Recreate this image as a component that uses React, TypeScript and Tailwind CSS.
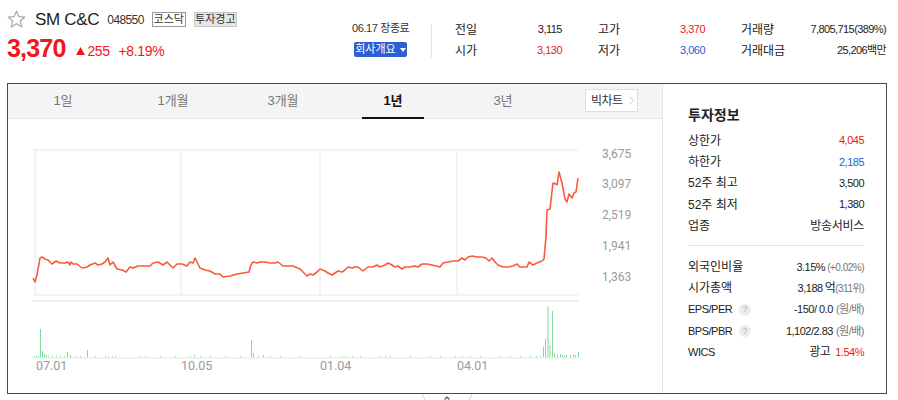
import React from 'react';

const linePts =
  '33,278 35,282 37,275 40,258 42,257 45,259 48,260 52,264 56,261 60,263 65,263 68,262 70,265 71,262 73,264 77,264 82,268 87,267 90,265 95,263 98,265 102,264 105,262 108,258 110,265 113,262 117,269 122,270 126,272 130,267 133,268 138,266 145,266 150,266 153,263 158,262 163,265 167,262 173,268 177,264 182,264 187,266 190,262 193,263 195,258 200,268 205,270 210,271 215,274 220,274 223,277 230,276 237,274 243,273 249,272 251,265 253,262 257,263 260,262 265,262 270,263 275,263 278,262 283,266 287,266 293,266 300,269 303,272 307,276 310,274 313,275 317,272 320,269 325,271 328,273 332,275 335,273 338,271 342,272 345,270 348,267 352,268 355,267 358,267 363,271 368,267 373,267 377,265 380,267 385,265 388,263 392,265 395,267 398,266 402,269 405,267 410,267 415,266 418,267 422,264 427,264 432,265 436,266 440,267 443,263 448,262 453,261 458,261 462,258 465,260 468,257 472,256 477,257 482,257 486,258 489,261 492,258 495,262 498,265 503,267 508,267 513,266 517,264 520,267 527,267 529,262 533,265 537,263 542,261 544,259 546,237 547,210 550,209 553,183 556,184 557,185 559,172 562,183 565,199 567,202 569,194 572,198 574,193 576,192 578,178';

// volume bars: [x, top]
const volBars: [number, number][] = [
  [40, 329], [42, 351], [44, 354], [46, 355], [67, 352], [70, 355], [87, 350], [194, 355],
  [251, 340], [253, 353], [263, 355], [543, 347], [545, 339], [547.5, 306], [549.5, 345],
  [552, 311], [554, 353], [557, 355], [560, 354], [562, 355], [564, 355.5], [566, 355],
  [570, 355], [573, 354], [575, 355], [578, 352],
];
const smallBars = [
  34, 36, 38, 48, 52, 56, 60, 64, 75, 80, 95, 105, 108, 112, 115, 140, 145, 160, 175, 190, 200,
  210, 225, 240, 258, 270, 280, 300, 330, 342, 345, 352, 360, 380, 385, 390, 410, 430, 440, 455,
  462, 470, 480, 500, 510, 520, 530, 536, 540,
];

const yLabels = [
  { v: '3,675', y: 155 },
  { v: '3,097', y: 185 },
  { v: '2,519', y: 216 },
  { v: '1,941', y: 247 },
  { v: '1,363', y: 278 },
];
const xLabels = [
  { v: '07.01', x: 36 },
  { v: '10.05', x: 181 },
  { v: '01.04', x: 320 },
  { v: '04.01', x: 457 },
];

const tabs = ['1일', '1개월', '3개월', '1년', '3년'];

const Help = () => (
  <span className="ml-[7px] inline-flex h-[12px] w-[12px] items-center justify-center rounded-full bg-[#ececec] text-[9px] font-bold leading-none text-[#c4c4c4]">
    ?
  </span>
);

const Row = ({ label, children }: { label: React.ReactNode; children: React.ReactNode }) => (
  <div className="flex h-[21.3px] items-center justify-between">
    <div className="flex items-center text-[12px] text-[#222]">{label}</div>
    <div className="flex items-center text-[11px] tracking-[-0.5px] text-[#222]">{children}</div>
  </div>
);

export default function App() {
  return (
    <div className="h-[400px] w-[898px] overflow-hidden bg-white font-['Liberation_Sans','Noto_Sans_CJK_KR',sans-serif] text-[#222]">
      {/* header */}
      <div className="flex h-[83px]">
        <div className="w-[345px] pl-[7px] pt-[10px]">
          <div className="flex h-[19px] items-center">
            <svg width="19" height="19" viewBox="0 0 20 20">
              <polygon
                points="10,1.2 12.6,7 18.8,7.4 14,11.5 15.6,17.8 10,14.4 4.4,17.8 6,11.5 1.2,7.4 7.4,7"
                fill="none"
                stroke="#a8a8a8"
                strokeWidth="1.3"
                strokeLinejoin="round"
              />
            </svg>
            <span className="ml-[9px] text-[17px] leading-none tracking-[-0.3px] text-[#222]">SM C&amp;C</span>
            <span className="ml-[8px] text-[12px] leading-none tracking-[-0.6px] text-[#333]">048550</span>
            <span className="ml-[8px] flex h-[15px] w-[34px] items-center justify-center border border-[#999] bg-white text-[11px] leading-none text-[#333]">
              코스닥
            </span>
            <span className="ml-[8px] flex h-[15px] w-[43px] items-center justify-center border border-[#c8c8c8] bg-[#e6e6e6] text-[11px] leading-none text-[#333]">
              투자경고
            </span>
          </div>
          <div className="mt-[6px] flex h-[26px] items-end">
            <span className="text-[25px] font-bold leading-[26px] tracking-[-0.8px] text-[#f0161c]">3,370</span>
            <span className="mb-[3px] ml-[10px] flex items-center text-[14px] leading-none text-[#f0161c]">
              <svg width="9" height="8" viewBox="0 0 9 8" className="mr-[3px]">
                <polygon points="4.5,0 9,8 0,8" fill="#f0161c" />
              </svg>
              <span className="tracking-[-0.5px]">255</span>
              <span className="ml-[9px] tracking-[-0.3px]">+8.19%</span>
            </span>
          </div>
        </div>

        <div className="flex pt-[19px]">
          <div className="w-[86px] pl-[7px]">
            <div className="h-[17px] pt-[1px] text-[11px] leading-[16px] tracking-[-0.4px] text-[#333]">06.17 장종료</div>
            <div className="mt-[6px] ml-[2px] flex h-[15px] w-[53px] items-center justify-center rounded-[2px] bg-[#2c5fcf] text-[11px] leading-none text-white">
              회사개요
              <svg width="6" height="4" viewBox="0 0 6 4" className="ml-[4px]">
                <polygon points="0,0 6,0 3,4" fill="#fff" />
              </svg>
            </div>
          </div>
          <div className="mt-[5px] h-[34px] w-px bg-[#e2e2e2]" />
          <div className="ml-[23px] flex gap-[36px]">
            {[
              [['전일', '3,115', ''], ['시가', '3,130', 'text-[#f0161c]']],
              [['고가', '3,370', 'text-[#f0161c]'], ['저가', '3,060', 'text-[#1a5fd6]']],
            ].map((col, i) => (
              <div key={i} className="w-[107px]">
                {col.map(([l, v, c]) => (
                  <div key={l} className="flex h-[21px] items-center justify-between">
                    <span className="text-[12px] text-[#222]">{l}</span>
                    <span className={`text-[11px] tracking-[-0.5px] ${c || 'text-[#222]'}`}>{v}</span>
                  </div>
                ))}
              </div>
            ))}
            <div className="w-[145px]">
              <div className="flex h-[21px] items-center justify-between">
                <span className="text-[12px] text-[#222]">거래량</span>
                <span className="text-[11px] tracking-[-0.6px] text-[#222]">7,805,715(389%)</span>
              </div>
              <div className="flex h-[21px] items-center justify-between">
                <span className="text-[12px] text-[#222]">거래대금</span>
                <span className="text-[11px] tracking-[-0.6px] text-[#222]">25,206백만</span>
              </div>
            </div>
          </div>
        </div>
      </div>

      {/* chart box */}
      <div className="relative ml-[7px] flex w-[880px] border border-[#4a4a4a]">
        <div className="w-[654px]">
          <div className="flex h-[35px] border-b border-[#e6e6e6] bg-[#f4f4f4]">
            {tabs.map((t) => {
              const active = t === '1년';
              return (
                <div key={t} className="relative flex h-[34px] w-[110px] items-center justify-center">
                  <span className={`text-[13px] ${active ? 'font-bold text-[#111]' : 'text-[#777]'}`}>{t}</span>
                  {active && <div className="absolute bottom-[-1px] left-[24px] h-[2px] w-[62px] bg-[#111]" />}
                </div>
              );
            })}
            <div className="ml-[27px] mt-[5px] flex h-[23px] w-[53px] shrink-0 items-center whitespace-nowrap border border-[#dedede] bg-white pl-[5px] text-[12px] leading-none tracking-[-0.5px] text-[#333]">
              빅차트
              <svg width="5" height="9" viewBox="0 0 5 9" className="ml-[6px] shrink-0">
                <polyline points="0.5,0.5 4.5,4.5 0.5,8.5" fill="none" stroke="#c8c8c8" strokeWidth="1" />
              </svg>
            </div>
          </div>
          <svg width="654" height="274" viewBox="8 119 654 274" className="block">
            {/* grid */}
            <g stroke="#efefef" strokeWidth="1.5" fill="none">
              <line x1="33" y1="150" x2="578" y2="150" />
              <line x1="33" y1="295" x2="578" y2="295" />
              <line x1="35" y1="150" x2="35" y2="295" />
              <line x1="181" y1="150" x2="181" y2="295" />
              <line x1="320" y1="150" x2="320" y2="295" />
              <line x1="457" y1="150" x2="457" y2="295" />
            </g>
            <line x1="32" y1="301" x2="578" y2="301" stroke="#ececec" strokeWidth="2" />
            {/* volume */}
            <g fill="#86d89c">
              {smallBars.map((x) => (
                <rect key={'s' + x} x={x} y={356} width="1" height="1.5" />
              ))}
              {volBars.map(([x, t]) => (
                <rect key={'v' + x} x={x} y={t} width="1" height={357.5 - t} />
              ))}
            </g>
            <line x1="32" y1="358" x2="578" y2="358" stroke="#ececec" strokeWidth="1.5" />
            {/* price line */}
            <polyline points={linePts} fill="none" stroke="#fb5a3a" strokeWidth="1.6" strokeLinejoin="round" />
            {yLabels.map((l) => (
              <text key={l.v} x="602" y={l.y} dominantBaseline="middle" fontSize="12" fill="#9a9a9a" fontFamily="Roboto, 'Liberation Sans', sans-serif">
                {l.v}
              </text>
            ))}
            {xLabels.map((l) => (
              <text key={l.v} x={l.x} y="367" dominantBaseline="middle" fontSize="12.5" fill="#9a9a9a" fontFamily="Roboto, 'Liberation Sans', sans-serif">
                {l.v}
              </text>
            ))}
          </svg>
        </div>

        {/* 투자정보 */}
        <div className="h-[309px] w-[224px] border-l border-[#e4e4e4] pl-[25px] pr-[22px] pt-[21px]">
          <div className="h-[20px] text-[14px] font-bold leading-[20px] text-[#222]">투자정보</div>
          <div className="mt-[5px]">
            <Row label="상한가"><span className="text-[#f0161c]">4,045</span></Row>
            <Row label="하한가"><span className="text-[#1a5fd6]">2,185</span></Row>
            <Row label="52주 최고">3,500</Row>
            <Row label="52주 최저">1,380</Row>
            <Row label="업종"><span className="text-[12px] tracking-[-0.3px]">방송서비스</span></Row>
          </div>
          <div className="mt-[9px] h-px bg-[#e4e4e4]" />
          <div className="mt-[10px]">
            <Row label="외국인비율">
              3.15%<span className="ml-[2px] text-[10px] text-[#777]">(+0.02%)</span>
            </Row>
            <Row label="시가총액">
              3,188<span className="ml-[2px] text-[12px]">억</span>
              <span className="text-[10px] text-[#777]">(311위)</span>
            </Row>
            <Row label={<><span className="text-[11px] tracking-[-0.5px]">EPS/PER</span><Help /></>}>
              -150/ 0.0<span className="ml-[3px] text-[11px] text-[#777]">(원/배)</span>
            </Row>
            <Row label={<><span className="text-[11px] tracking-[-0.5px]">BPS/PBR</span><Help /></>}>
              1,102/2.83<span className="ml-[3px] text-[11px] text-[#777]">(원/배)</span>
            </Row>
            <Row label={<span className="text-[11px] tracking-[-0.5px]">WICS</span>}>
              <span className="text-[12px]">광고</span>
              <span className="ml-[5px] text-[#f0161c]">1.54%</span>
            </Row>
          </div>
        </div>

        {/* collapse tab */}
        <svg width="54" height="8" viewBox="0 0 54 8" className="absolute left-[412px] top-[309px]">
          <line x1="2" y1="1" x2="5.5" y2="8" stroke="#cfcfcf" strokeWidth="1" />
          <line x1="52" y1="1" x2="48.5" y2="8" stroke="#cfcfcf" strokeWidth="1" />
          <polyline points="24.5,6.5 27,4 29.5,6.5" fill="none" stroke="#555" strokeWidth="1.2" />
        </svg>
      </div>
    </div>
  );
}
